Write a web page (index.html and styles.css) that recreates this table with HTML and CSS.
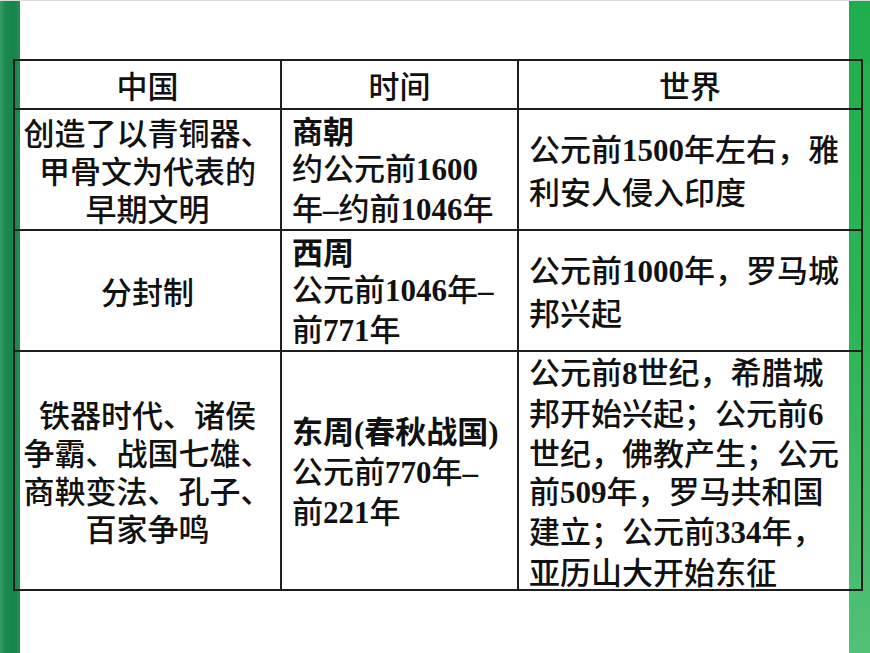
FILE: index.html
```html
<!DOCTYPE html>
<html lang="zh">
<head>
<meta charset="utf-8">
<title>中国与世界</title>
<link rel="stylesheet" href="styles.css">
</head>
<body>
<div class="slide">
  <table class="history">
    <colgroup>
      <col class="c1">
      <col class="c2">
      <col class="c3">
    </colgroup>
    <thead>
      <tr class="head">
        <th>中国</th>
        <th>时间</th>
        <th>世界</th>
      </tr>
    </thead>
    <tbody>
      <tr class="r1">
        <td class="cn">创造了以青铜器、<br>甲骨文为代表的<br>早期文明</td>
        <td class="time"><b>商朝</b><br>约公元前<span class="n">1600</span><br>年<span class="n">–</span>约前<span class="n">1046</span>年</td>
        <td class="world wl">公元前<span class="n">1500</span>年左右，雅<br>利安人侵入印度</td>
      </tr>
      <tr class="r2">
        <td class="cn">分封制</td>
        <td class="time"><b>西周</b><br>公元前<span class="n">1046</span>年<span class="n">–</span><br>前<span class="n">771</span>年</td>
        <td class="world wl">公元前<span class="n">1000</span>年，罗马城<br>邦兴起</td>
      </tr>
      <tr class="r3">
        <td class="cn">铁器时代、诸侯<br>争霸、战国七雄、<br>商鞅变法、孔子、<br>百家争鸣</td>
        <td class="time"><b>东周<span class="n">(</span>春秋战国<span class="n">)</span></b><br>公元前<span class="n">770</span>年<span class="n">–</span><br>前<span class="n">221</span>年</td>
        <td class="world">公元前<span class="n">8</span>世纪，希腊城<br>邦开始兴起；公元前<span class="n">6</span><br>世纪，佛教产生；公元<br>前<span class="n">509</span>年，罗马共和国<br>建立；公元前<span class="n">334</span>年，<br>亚历山大开始东征</td>
      </tr>
    </tbody>
  </table>
</div>
</body>
</html>
```

FILE: styles.css
```css
html, body {
  margin: 0;
  padding: 0;
}

body {
  width: 870px;
  height: 653px;
  overflow: hidden;
  background:
    linear-gradient(90deg, #3b9f68 0px, #1c8a50 5px, #17844b 14px, #1e8f52 20px) left top / 20px 100% no-repeat,
    linear-gradient(180deg, #1fae4d 0%, #2cb456 50%, #52c077 100%) right top / 21px 100% no-repeat,
    #ffffff;
  border-top: 1px solid #dcdcdc;
  box-sizing: border-box;
  font-family: "Noto Sans CJK SC", "Noto Sans", sans-serif;
  font-weight: 500;
  color: #111;
}

.slide {
  padding: 58px 0 0 13px;
}

.history {
  border-collapse: collapse;
  table-layout: fixed;
  width: 848px;
  font-size: 31px;
  line-height: 38px;
}

.c1 { width: 267px; }
.c2 { width: 237px; }
.c3 { width: 344px; }

.history th,
.history td {
  border: 2px solid #1e1e1e;
  padding: 0;
  vertical-align: middle;
}

.history th {
  font-weight: 500;
  text-align: center;
  height: 47px;
}

.r1 td, .r2 td { height: 119px; }
.r3 td { height: 231px; }

.cn {
  text-align: center;
  white-space: nowrap;
}

.time {
  padding-left: 10px !important;
  text-align: left;
  white-space: nowrap;
  line-height: 37px;
}

.time b {
  font-weight: 700;
}

.world {
  padding-left: 10px !important;
  text-align: left;
  white-space: nowrap;
  line-height: 37.5px;
}

.world.wl {
  line-height: 40px;
}

.n {
  font-family: "Liberation Serif", "Times New Roman", serif;
  font-weight: 700;
}
```
